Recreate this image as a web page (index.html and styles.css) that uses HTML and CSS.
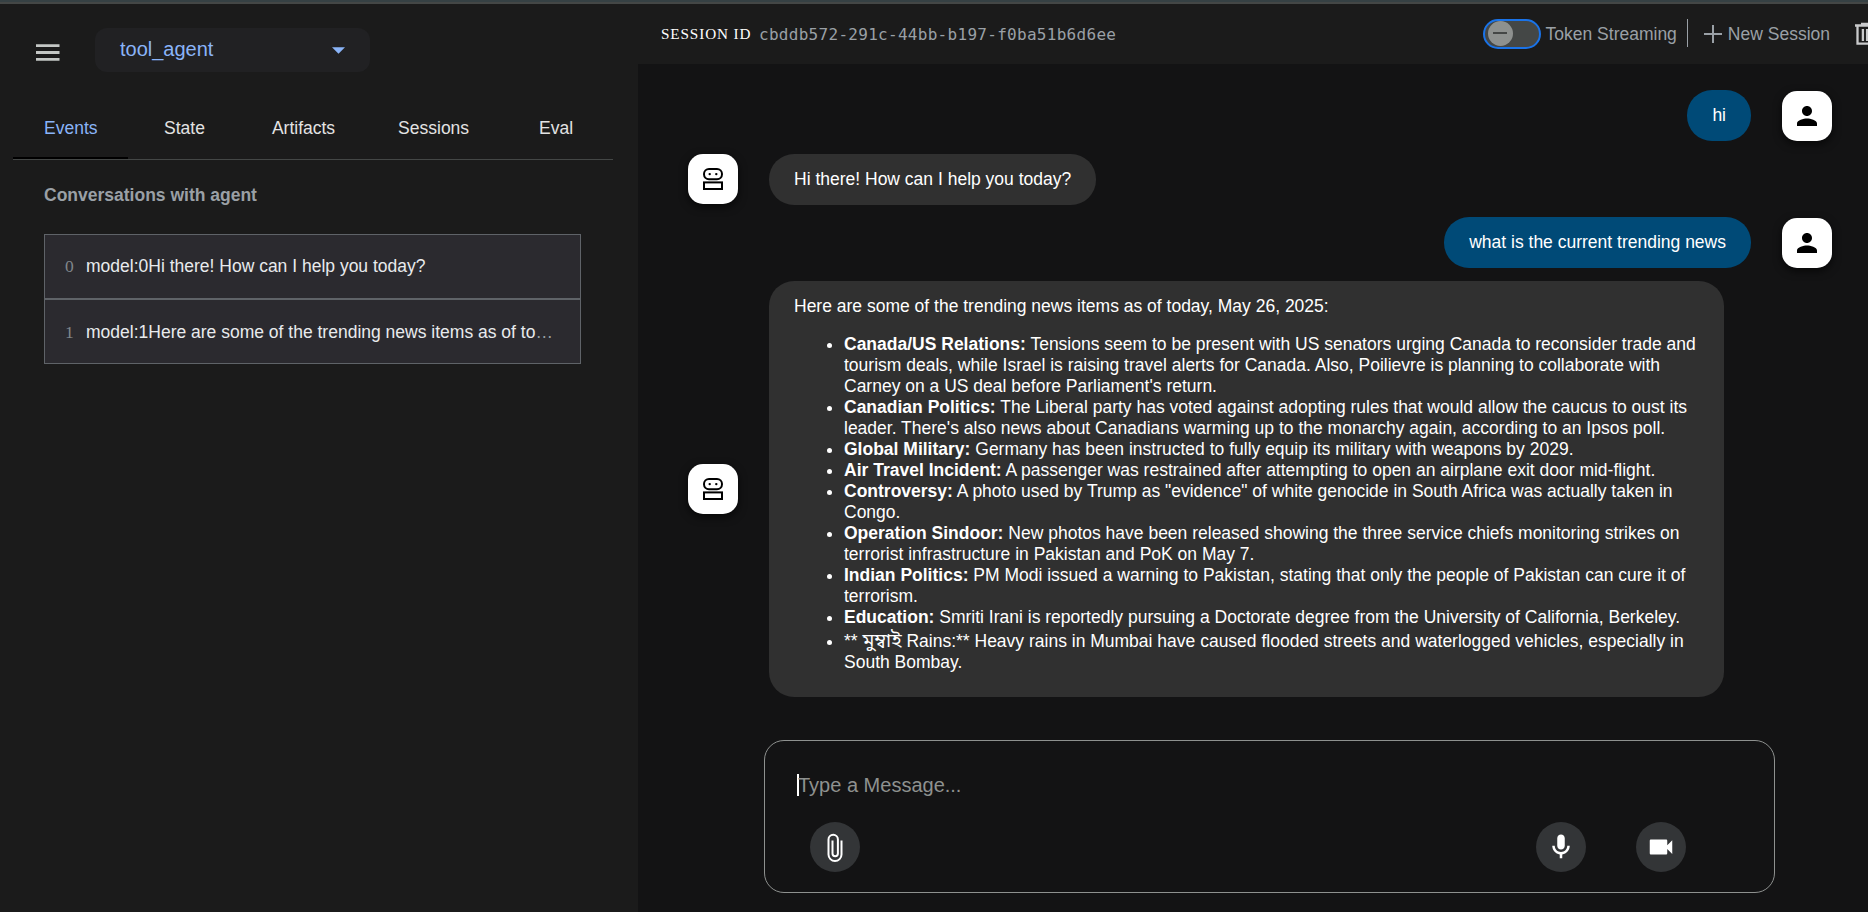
FILE: index.html
```html
<!DOCTYPE html>
<html lang="en">
<head>
<meta charset="utf-8">
<title>Agent Dev UI</title>
<link rel="stylesheet" href="styles.css">
</head>
<body>
<svg class="defs" width="0" height="0">
  <symbol id="bot" viewBox="0 0 20 22"><rect x="1" y="1" width="18" height="10.200" rx="5" fill="none" stroke="#000" stroke-width="2"/><circle cx="6.700" cy="6.100" r="1.200"/><circle cx="13.300" cy="6.100" r="1.200"/><rect x="1" y="14.400" width="18" height="6.600" fill="none" stroke="#000" stroke-width="2"/></symbol>
  <symbol id="person" viewBox="0 0 24 24"><path d="M12 12c2.210 0 4-1.790 4-4s-1.790-4-4-4-4 1.790-4 4 1.790 4 4 4zm0 2c-2.670 0-8 1.340-8 4v2h16v-2c0-2.660-5.330-4-8-4z"/></symbol>
</svg>
<div class="app">
  <aside class="sidebar">
    <div class="top">
      <svg class="menu" viewBox="0 0 24 17"><path d="M0 0h24v3H0zM0 7h24v3H0zM0 14h24v3H0z"/></svg>
      <div class="select"><span>tool_agent</span><svg class="caret" viewBox="0 0 12 6"><path d="M0 0h12L6 6z"/></svg></div>
    </div>
    <nav class="tabs">
      <span class="tab active">Events</span><span class="tab state">State</span><span class="tab artifacts">Artifacts</span><span class="tab sessions">Sessions</span><span class="tab">Eval</span>
    </nav>
    <h2 class="heading">Conversations with agent</h2>
    <div class="events">
      <div class="event"><span class="num">0</span><span class="label">model:0Hi there! How can I help you today?</span></div>
      <div class="event second"><span class="num">1</span><span class="label">model:1Here are some of the trending news items as of to<span class="dots">…</span></span></div>
    </div>
  </aside>
  <main class="main">
    <header class="bar">
      <span class="sid-label">SESSION ID</span><span class="sid">cbddb572-291c-44bb-b197-f0ba51b6d6ee</span>
      <div class="tools">
        <span class="toggle"><span class="knob"></span></span>
        <span class="tool-text">Token Streaming</span>
        <span class="divider"></span>
        <svg class="plus" viewBox="0 0 18 18"><path d="M8 0h2v8h8v2h-8v8H8v-8H0V8h8z"/></svg>
        <span class="tool-text">New Session</span>
        <svg class="trash" viewBox="0 0 20 24"><path d="M0 3.500h20M6 2h8M2.500 4v17.700h15V4M7.900 7v12M12.100 7v12" fill="none" stroke="#c9cacb" stroke-width="2.300"/></svg>
      </div>
    </header>
    <section class="chat">
      <div class="row user"><div class="bubble">hi</div><div class="avatar"><svg class="person"><use href="#person"/></svg></div></div>
      <div class="row"><div class="avatar"><svg class="bot"><use href="#bot"/></svg></div><div class="bubble">Hi there! How can I help you today?</div></div>
      <div class="row user"><div class="bubble">what is the current trending news</div><div class="avatar"><svg class="person"><use href="#person"/></svg></div></div>
      <div class="row"><div class="avatar"><svg class="bot"><use href="#bot"/></svg></div>
        <div class="bubble long">
          <p>Here are some of the trending news items as of today, May 26, 2025:</p>
          <ul>
            <li><b>Canada/US Relations:</b> Tensions seem to be present with US senators urging Canada to reconsider trade and<br>tourism deals, while Israel is raising travel alerts for Canada. Also, Poilievre is planning to collaborate with<br>Carney on a US deal before Parliament's return.</li>
            <li><b>Canadian Politics:</b> The Liberal party has voted against adopting rules that would allow the caucus to oust its<br>leader. There's also news about Canadians warming up to the monarchy again, according to an Ipsos poll.</li>
            <li><b>Global Military:</b> Germany has been instructed to fully equip its military with weapons by 2029.</li>
            <li><b>Air Travel Incident:</b> A passenger was restrained after attempting to open an airplane exit door mid-flight.</li>
            <li><b>Controversy:</b> A photo used by Trump as "evidence" of white genocide in South Africa was actually taken in<br>Congo.</li>
            <li><b>Operation Sindoor:</b> New photos have been released showing the three service chiefs monitoring strikes on<br>terrorist infrastructure in Pakistan and PoK on May 7.</li>
            <li><b>Indian Politics:</b> PM Modi issued a warning to Pakistan, stating that only the people of Pakistan can cure it of<br>terrorism.</li>
            <li><b>Education:</b> Smriti Irani is reportedly pursuing a Doctorate degree from the University of California, Berkeley.</li>
            <li class="last">** <span class="bn">মুম্বাই</span> Rains:** Heavy rains in Mumbai have caused flooded streets and waterlogged vehicles, especially in<br>South Bombay.</li>
          </ul>
        </div>
      </div>
    </section>
    <div class="composer">
      <div class="input"><span class="cursor"></span>Type a Message...</div>
      <div class="actions">
        <span class="round"><svg class="clip" viewBox="0 0 16 29"><path d="M14.500 7.500v14a6.500 6.500 0 0 1-13 0V6.500a4.700 4.700 0 0 1 9.400 0v14a2.700 2.700 0 0 1-5.400 0V7.500" fill="none" stroke="#fff" stroke-width="2"/></svg></span>
        <span class="round mic"><svg class="icon" viewBox="0 0 24 24"><path d="M12 14c1.660 0 3-1.340 3-3V5c0-1.660-1.340-3-3-3S9 3.340 9 5v6c0 1.660 1.340 3 3 3zm5-3c0 2.760-2.240 5-5 5s-5-2.240-5-5H5c0 3.530 2.610 6.430 6 6.920V21h2v-3.080c3.390-.49 6-3.390 6-6.920h-2z"/></svg></span>
        <span class="round"><svg class="icon" viewBox="0 0 24 24"><path d="M17 10.500V7c0-.55-.45-1-1-1H4c-.55 0-1 .45-1 1v10c0 .55.45 1 1 1h12c.55 0 1-.45 1-1v-3.500l4 4v-11l-4 4z"/></svg></span>
      </div>
    </div>
  </main>
</div>
</body>
</html>
```
FILE: styles.css
```css
* { box-sizing: border-box; }
body { margin: 0; background: #131314; color: #fff; font: 17.5px/21px "Liberation Sans", Arial, sans-serif; overflow: hidden; }
.defs { display: block; position: absolute; }
.app { display: flex; width: 1868px; height: 912px; border-top: 2px solid #364144; box-shadow: inset 0 2px #444746; overflow: hidden; }
.sidebar { width: 638px; flex: none; background: #1b1b1b; margin-top: 2px; padding-top: 24px; }
.top { display: flex; align-items: flex-start; padding-left: 36px; }
.menu { width: 23.500px; height: 17px; margin: 15.500px 35.500px 0 0; fill: #c4c7c5; }
.select { width: 275px; height: 44px; background: #212123; border-radius: 12px; color: #8ab4f8; font-size: 20px; display: flex; align-items: center; justify-content: space-between; padding: 0 25px 1px; }
.caret { width: 13px; height: 7px; fill: #8ab4f8; margin-top: 2px; }
.tabs { display: flex; height: 60px; margin: 28px 25px 0 13px; border-bottom: 1px solid #444746; color: #e3e3e3; }
.tab { padding: 18px 31px 0; height: 59px; white-space: nowrap; }
.tab.active { color: #8ab4f8; border-bottom: 2px solid #000; width: 115px; }
.tab.state { padding: 18px 36px 0; }
.tab.artifacts { padding: 18px 32px 0 31px; }
.tab.sessions { padding: 18px 39px 0 31px; }
.heading { margin: 25px 0 0 44px; font-size: 17.5px; line-height: 21px; color: #9aa0a6; }
.events { margin: 28px 0 0 44px; width: 537px; }
.event { height: 65px; border: 1px solid #5f6368; background: #2b2a2f; display: flex; align-items: center; padding: 0 0 0 20px; color: #e8eaed; }
.event.second { padding-top: 2px; }
.num { font-family: "Liberation Serif", serif; color: #80868b; width: 21px; }
.label { white-space: nowrap; }
.dots { color: #9aa0a6; }
.main { flex: 1; min-width: 0; margin-top: 2px; display: flex; flex-direction: column; }
.bar { height: 60px; background: #1b1b1b; display: flex; align-items: flex-start; padding: 0 0 0 23px; white-space: nowrap; }
.sid-label { font: 15.2px/20px "Liberation Serif", serif; letter-spacing: .9px; width: 98px; margin-top: 20px; }
.sid { font: 16px/20px "DejaVu Sans Mono", monospace; letter-spacing: .29px; color: #9aa0a6; margin-top: 21px; }
.tools { margin-left: auto; display: flex; align-items: center; height: 60px; padding-bottom: 0; color: #9aa0a6; }
.toggle { width: 58px; height: 30px; border: 2px solid #1a73e8; border-radius: 15px; background: #444746; padding: 0 0 0 3px; margin: 0 5px 1px 0; }
.knob { display: flex; align-items: center; justify-content: center; width: 25px; height: 25px; border-radius: 50%; background: #8e918f; }
.knob::before { content: ""; width: 14px; height: 2px; background: #444746; }
.divider { width: 1px; height: 28px; background: #9aa0a6; margin: 0 16px 2px 10px; }
.plus { width: 18px; height: 18px; fill: #9aa0a6; margin-right: 6px; }
.trash { width: 20px; height: 24px; margin: 0 -7px 0 25px; }
.chat { height: 649px; flex: none; padding: 21.3px 36px 0 50px; }
.row { display: flex; align-items: center; padding: 5px 0; margin-bottom: 2.5px; min-height: 61px; }
.user { justify-content: flex-end; }
.avatar { width: 50px; height: 50px; flex: none; border-radius: 15px; background: #fff; display: flex; align-items: center; justify-content: center; box-shadow: 0 3px 8px #000a; }
.person { width: 30px; height: 30px; }
.bot { width: 20px; height: 22px; }
.bubble { background: #303030; border-radius: 25px; padding: 15px 25px; min-height: 51px; margin-left: 31px; white-space: nowrap; }
.user .bubble { background: #004a77; margin: 0 31px 0 0; }
.long { width: 955px; height: 416px; padding: 15px 25px 0; }
.long p { margin: 0 0 17px; }
.long ul { margin: 0; padding-left: 50px; }
.last { padding-top: 3px; }
.bn { font-family: "Noto Sans Bengali", "Noto Sans", sans-serif; font-size: 19.5px; line-height: 1; }
.composer { width: 1011px; height: 153px; flex: none; margin: 27px 0 0 126px; border: 1px solid #8e918f; border-radius: 20px; padding: 33px 0 0 32px; }
.input { display: flex; align-items: center; height: 22px; font-size: 20px; color: #8e918f; }
.cursor { width: 2px; height: 22px; background: #fff; margin-right: -1px; }
.actions { display: flex; margin: 26px 88px 0 13px; gap: 50px; }
.round { width: 50px; height: 50px; border-radius: 50%; background: #333537; display: flex; align-items: center; justify-content: center; }
.mic { margin-left: auto; }
.icon { width: 30px; height: 30px; fill: #fff; }
.clip { width: 16px; height: 29px; }
```
